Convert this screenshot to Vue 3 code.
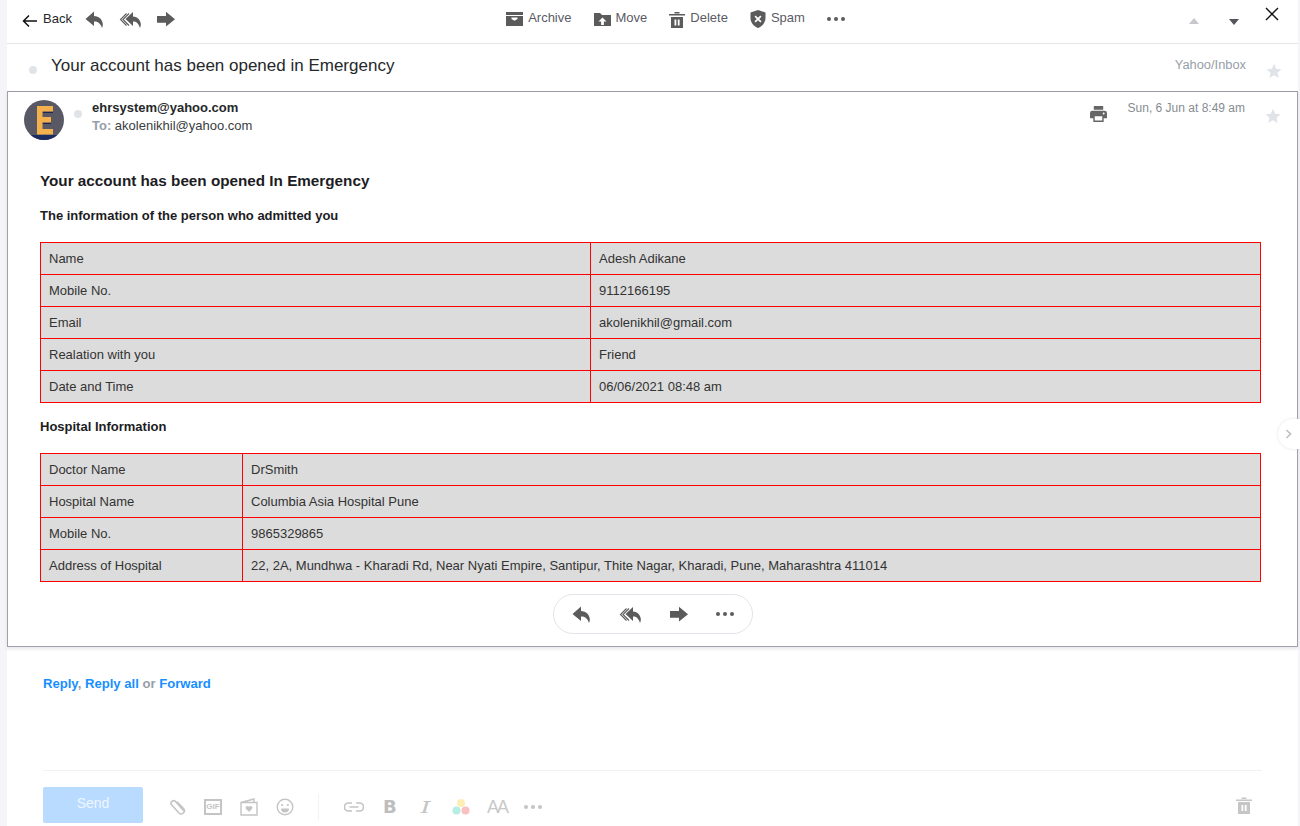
<script setup>
const personRows = [
  ['Name', 'Adesh Adikane'],
  ['Mobile No.', '9112166195'],
  ['Email', 'akolenikhil@gmail.com'],
  ['Realation with you', 'Friend'],
  ['Date and Time', '06/06/2021 08:48 am']
]

const hospitalRows = [
  ['Doctor Name', 'DrSmith'],
  ['Hospital Name', 'Columbia Asia Hospital Pune'],
  ['Mobile No.', '9865329865'],
  ['Address of Hospital', '22, 2A, Mundhwa - Kharadi Rd, Near Nyati Empire, Santipur, Thite Nagar, Kharadi, Pune, Maharashtra 411014']
]

const replyPath = 'M9 2.500 .5 10 9 17v-4.500c4 0 6.500 1.800 8 6.500 1-2 1-4 .5-5.500C16.300 9 13 7.200 9 7z'
const allPath = 'M14 3 6.500 10 14 17v-4.500c3.500 0 5.500 1.800 7 6.500 1-2 1-4 .5-5.500-1-3.800-3.800-5.500-7.500-6z'
const forwardPath = 'M0 7h9V2.800l9 7.400-9 7.300V13.700H0z'
</script>

<template>
  <div class="page">
    <div class="mail">
      <header class="toolbar">
        <div class="left-tools">
          <svg class="back-arrow" width="16" height="14" viewBox="0 0 16 14"><path d="M7 1.500 1.500 7 7 12.500M1.500 7H15" fill="none" stroke="#111" stroke-width="1.500" /></svg>
          <span class="back-label">Back</span>
          <svg class="ic reply-ic" width="20" height="20" viewBox="0 0 20 20"><path :d="replyPath" /></svg>
          <svg class="ic all-ic" width="24" height="20" viewBox="0 0 24 20">
            <path :d="allPath" />
            <path d="M7.500 4.500 1.500 10.500l6 6M10 4.500l-6 6 6 6" fill="none" stroke="#5b5b5b" stroke-width="1.100" />
          </svg>
          <svg class="ic fwd-ic" width="19" height="20" viewBox="0 0 19 20"><path :d="forwardPath" /></svg>
        </div>
        <div class="mid-tools">
          <span class="tool">
            <svg class="ic" width="17" height="14" viewBox="0 0 17 14"><path d="M0 0h17v3H0zM0 4h17v10H0zM5.500 5.500v1.600l3 1.600 3-1.600V5.500z" fill-rule="evenodd" /></svg>
            Archive
          </span>
          <span class="tool">
            <svg class="ic" width="17" height="16" viewBox="0 0 17 16"><path d="M0 2h6l2 2h9v11H0zM8.500 6.500l-4 4h2.600V14h2.800v-3.500h2.600z" fill-rule="evenodd" /></svg>
            Move
          </span>
          <span class="tool">
            <svg class="ic" width="16" height="17" viewBox="0 0 16 17"><path d="M0 3h16v1.400H0zM5.500 1h5v1.400h-5zM2 6h12v11H2zM5.500 8.500v6h1.800v-6zM8.800 8.500v6h1.800v-6z" fill-rule="evenodd" /></svg>
            Delete
          </span>
          <span class="tool">
            <svg class="ic" width="16" height="18" viewBox="0 0 16 18"><path d="M8 0 15.500 2.500V8c0 4.500-3 8-7.500 10C3.500 16 .5 12.500 .5 8V2.500zM5.700 5.500 4.500 6.700 6.800 9l-2.300 2.300 1.200 1.200L8 10.200l2.300 2.300 1.200-1.200L9.200 9l2.300-2.300-1.200-1.200L8 7.800z" fill-rule="evenodd" /></svg>
            Spam
          </span>
          <span class="dots"><i /><i /><i /></span>
        </div>
        <div class="right-tools">
          <span class="tri up" />
          <span class="tri down" />
          <svg class="close" width="14" height="14" viewBox="0 0 14 14"><path d="M1 1l12 12M13 1 1 13" stroke="#111" stroke-width="1.400" fill="none" /></svg>
        </div>
      </header>

      <div class="subject-row">
        <span class="dot subject-dot" />
        <h1 class="subject">Your account has been opened in Emergency</h1>
        <span class="folder">Yahoo/Inbox</span>
        <svg class="star" width="16" height="16" viewBox="0 0 16 16"><path d="M8 .8l2.200 4.900 5.300.5-4 3.500 1.200 5.200L8 12.200l-4.700 2.700 1.200-5.200-4-3.500 5.300-.5z" /></svg>
      </div>

      <section class="card">
        <div class="card-head">
          <div class="avatar">
            <svg width="40" height="40" viewBox="0 0 40 40">
              <rect width="40" height="40" fill="#595965" />
              <rect y="35" width="40" height="5" fill="#1d2b63" />
              <path d="M18.500 11.500H29v1.500H18.500zM18.500 22.500H27V24h-8.500z" fill="#1d2550" />
              <path d="M13 6h16v5.500H18.500V17H27v5.500h-8.500V29H29v5.500H13z" fill="#f5b04e" />
            </svg>
          </div>
          <span class="dot head-dot" />
          <div class="addresses">
            <div class="from">ehrsystem@yahoo.com</div>
            <div class="to"><b>To:</b> akolenikhil@yahoo.com</div>
          </div>
          <svg class="ic print" width="17" height="16" viewBox="0 0 18 17"><path d="M4 0h10v4H4zM2.500 5h13A2.500 2.500 0 0 1 18 7.500V13h-3.500v4h-11v-4H0V7.500A2.500 2.500 0 0 1 2.500 5zM5 11v4.500h8V11zM14.500 7a1 1 0 1 0 0 2 1 1 0 0 0 0-2z" fill-rule="evenodd" /></svg>
          <span class="date">Sun, 6 Jun at 8:49 am</span>
          <svg class="star card-star" width="16" height="16" viewBox="0 0 16 16"><path d="M8 .8l2.200 4.900 5.300.5-4 3.500 1.200 5.200L8 12.200l-4.700 2.700 1.200-5.200-4-3.500 5.300-.5z" /></svg>
        </div>

        <div class="body">
          <h2 class="body-title">Your account has been opened In Emergency</h2>
          <h3 class="body-sub">The information of the person who admitted you</h3>
          <table class="info first-table">
            <colgroup><col class="person-col" /><col /></colgroup>
            <tr v-for="row in personRows" :key="row[0]">
              <td>{{ row[0] }}</td>
              <td>{{ row[1] }}</td>
            </tr>
          </table>
          <h3 class="body-sub hospital-sub">Hospital Information</h3>
          <table class="info second-table">
            <colgroup><col class="hospital-col" /><col /></colgroup>
            <tr v-for="row in hospitalRows" :key="row[0]">
              <td>{{ row[0] }}</td>
              <td>{{ row[1] }}</td>
            </tr>
          </table>
        </div>

        <div class="pill-wrap">
          <div class="pill">
            <svg class="ic" width="20" height="20" viewBox="0 0 20 20"><path :d="replyPath" /></svg>
            <svg class="ic" width="24" height="20" viewBox="0 0 24 20">
              <path :d="allPath" />
              <path d="M7.500 4.500 1.500 10.500l6 6M10 4.500l-6 6 6 6" fill="none" stroke="#5b5b5b" stroke-width="1.100" />
            </svg>
            <svg class="ic" width="19" height="20" viewBox="0 0 19 20"><path :d="forwardPath" /></svg>
            <span class="dots"><i /><i /><i /></span>
          </div>
        </div>
      </section>

      <div class="reply-links">
        <a>Reply</a><span class="sep">,</span> <a>Reply all</a> <span class="sep">or</span> <a>Forward</a>
      </div>

      <div class="compose">
        <button class="send">Send</button>
        <div class="compose-icons">
          <svg width="18" height="18" viewBox="0 0 18 18"><path d="M15.500 13.500 7.500 4.500a2.600 2.600 0 0 0-4 3.300l7.500 8.200a3.200 3.200 0 0 0 4.700-4.300L9 4.800" transform="translate(-1 -1)" fill="none" stroke="#c4c4c4" stroke-width="1.600" /></svg>
          <span class="gif">GIF</span>
          <svg width="18" height="18" viewBox="0 0 18 18"><path d="M1 4.500 14 1v3.500M1 4.500h16V17H1z" fill="none" stroke="#c4c4c4" stroke-width="1.400" /><path d="M9 14 5.800 10.800a1.800 1.800 0 0 1 3.200-1.700 1.800 1.800 0 0 1 3.200 1.700z" fill="#c4c4c4" /></svg>
          <svg width="18" height="18" viewBox="0 0 18 18"><circle cx="9" cy="9" r="7.800" fill="none" stroke="#c4c4c4" stroke-width="1.400" /><circle cx="6.200" cy="7" r="1.100" fill="#c4c4c4" /><circle cx="11.800" cy="7" r="1.100" fill="#c4c4c4" /><path d="M5 10.500h8a4 4 0 0 1-8 0z" fill="#c4c4c4" /></svg>
        </div>
        <div class="compose-divider" />
        <div class="format-icons">
          <svg class="link-ic" width="20" height="10" viewBox="0 0 20 10"><path d="M8 1H4.500a4 4 0 0 0 0 8H8M12 1h3.500a4 4 0 0 1 0 8H12M5.500 5h9" fill="none" stroke="#c4c4c4" stroke-width="1.600" /></svg>
          <b class="fmt-b">B</b>
          <i class="fmt-i">I</i>
          <svg class="colors-ic" width="18" height="18" viewBox="0 0 18 18"><circle cx="9" cy="5" r="4" fill="#fdeeb5" /><circle cx="4.500" cy="12.500" r="4" fill="#b5efe3" /><circle cx="13.500" cy="12.500" r="4" fill="#fbc0c0" /></svg>
          <span class="fmt-a">AA</span>
          <span class="dots faded"><i /><i /><i /></span>
        </div>
        <svg class="compose-trash" width="16" height="17" viewBox="0 0 16 17"><path d="M0 2.500h16v1.400H0zM5.500 .5h5v1.400h-5zM2 5h12v12H2zM5.500 8v6h1.800V8zM8.800 8v6h1.800V8z" fill="#c6c6c6" fill-rule="evenodd" /></svg>
      </div>

      <span class="next-btn">
        <svg width="8" height="10" viewBox="0 0 8 10"><path d="M1.500 1 5.500 5l-4 4" fill="none" stroke="#bdbdc4" stroke-width="1.600" /></svg>
      </span>
    </div>
  </div>
</template>

<style>
html, body {
  margin: 0;
  background: #f5f5f8;
}
</style>

<style scoped>
.page {
  height: 826px;
  overflow: hidden;
  padding: 0 2px 0 7px;
  font-family: "Liberation Sans", Arial, sans-serif;
  color: #26282a;
}

.mail {
  position: relative;
  height: 826px;
  background: #fff;
}

.ic {
  fill: #5b5b5b;
  flex: none;
}

.toolbar {
  display: grid;
  grid-template-columns: 1fr auto 1fr;
  height: 43px;
  border-bottom: 1px solid #e5e5e8;
  align-items: center;
}

.left-tools {
  display: flex;
  align-items: center;
  padding-left: 15px;
  padding-bottom: 5px;
}

.back-arrow {
  margin-top: 3px;
}

.back-label {
  font-size: 13px;
  margin: 0 0 2px 5px;
  color: #26282a;
}

.reply-ic {
  margin-left: 13px;
}

.all-ic {
  margin-left: 14px;
}

.fwd-ic {
  margin-left: 14px;
}

.mid-tools {
  display: flex;
  align-items: center;
  gap: 22px;
  padding-bottom: 9px;
  padding-left: 46px;
  font-size: 13px;
  color: #5b5b66;
}

.tool {
  display: flex;
  align-items: center;
  gap: 5px;
}

.tool .ic,
.mid-tools .dots {
  margin-top: 4px;
}

.dots {
  display: flex;
  gap: 3px;
}

.dots i {
  width: 4px;
  height: 4px;
  border-radius: 50%;
  background: #5b5b5b;
}

.dots.faded i {
  background: #c4c4c4;
}

.right-tools {
  display: flex;
  justify-content: flex-end;
  align-items: center;
  padding-right: 19px;
}

.tri {
  width: 0;
  height: 0;
  border-left: 5.500px solid transparent;
  border-right: 5.500px solid transparent;
}

.tri.up {
  border-bottom: 6px solid #c8c8cc;
  margin-bottom: 2px;
}

.tri.down {
  border-top: 6px solid #55555c;
  margin-left: 30px;
}

.close {
  margin-left: 26px;
  margin-bottom: 16px;
}

.subject-row {
  display: flex;
  height: 47px;
  position: relative;
  align-items: center;
}

.dot {
  width: 8px;
  height: 8px;
  border-radius: 50%;
  background: #e0e4e9;
  flex: none;
}

.subject-dot {
  margin: 5px 0 0 22px;
}

.subject {
  margin: 0 0 3px 14px;
  font-size: 17px;
  font-weight: 400;
  color: #26282a;
}

.folder {
  margin-left: auto;
  margin-right: 52px;
  margin-bottom: 7px;
  font-size: 12.850px;
  color: #979ea8;
}

.star {
  fill: #e0e4e9;
  flex: none;
}

.subject-row .star {
  position: absolute;
  right: 16px;
  top: 19px;
}

.card {
  height: 554px;
  border: 1px solid #a0a0ae;
  box-shadow: 0 2px 3px rgba(160, 160, 175, 0.25);
  border-top-color: #9a9aa6;
}

.card-head {
  display: flex;
  height: 50px;
  position: relative;
  padding: 8px 0 0 16px;
}

.avatar {
  width: 40px;
  height: 40px;
  flex: none;
  border-radius: 50%;
  overflow: hidden;
}

.head-dot {
  margin: 10px 10px 0 10px;
}

.from {
  font-size: 13px;
  font-weight: 700;
  line-height: 16px;
}

.to {
  font-size: 13px;
  line-height: 20px;
  color: #3a3d40;
}

.to b {
  color: #979ea8;
}

.print {
  position: absolute;
  left: 1082px;
  top: 14px;
  fill: #666;
}

.date {
  position: absolute;
  right: 52px;
  top: 9px;
  font-size: 12px;
  color: #878c91;
}

.card-star {
  position: absolute;
  right: 16px;
  top: 16px;
}

.body {
  padding: 21px 36px 0 32px;
}

.body-title {
  margin: 0;
  font-size: 15.250px;
  line-height: 20px;
  font-weight: 700;
  color: #1d1d1f;
}

.body-sub {
  margin: 15px 0 0;
  font-size: 13px;
  line-height: 20px;
  font-weight: 700;
  color: #1d1d1f;
}

.hospital-sub {
  margin-top: 14px;
}

.info {
  width: 100%;
  border-collapse: collapse;
  table-layout: fixed;
  background: #dcdcdc;
  font-size: 13px;
  margin-top: 16px;
}

.person-col {
  width: 550px;
}

.hospital-col {
  width: 202px;
}

.info td {
  height: 32px;
  padding: 0 8px;
  border: 1px solid #f00;
  color: #333;
  box-sizing: border-box;
}

.pill-wrap {
  display: flex;
  justify-content: center;
  margin-top: 12px;
}

.pill {
  display: flex;
  align-items: center;
  justify-content: center;
  gap: 27px;
  width: 198px;
  height: 38px;
  border: 1px solid #e3e4ea;
  border-radius: 20px;
}

.reply-links {
  padding: 29px 0 0 36px;
  font-size: 13.100px;
  font-weight: 700;
  line-height: 16px;
}

.reply-links a {
  color: #188fff;
}

.sep {
  color: #979ea8;
}

.compose {
  display: flex;
  align-items: center;
  margin: 78px 36px 0 36px;
  padding-top: 16px;
  border-top: 1px solid #f1f1f5;
}

.send {
  width: 100px;
  height: 36px;
  border: 0;
  border-radius: 2px;
  background: #b9dbff;
  color: #eef6ff;
  font-family: inherit;
  font-size: 14px;
  padding: 0 0 5px;
}

.compose-icons {
  display: flex;
  align-items: center;
  gap: 18px;
  margin-left: 26px;
  margin-top: 3px;
}

.gif {
  width: 14px;
  height: 12px;
  margin-left: -1px;
  border: 2px solid #c4c4c4;
  font-size: 8px;
  line-height: 12px;
  text-align: center;
  color: #c4c4c4;
  font-weight: 700;
}

.compose-divider {
  width: 1px;
  height: 26px;
  background: #f3f3f5;
  margin: 3px 0 0 24px;
}

.format-icons {
  display: flex;
  align-items: center;
  margin: 3px 0 0 25px;
}

.fmt-b {
  margin-left: 19px;
  width: 16px;
  font-family: "DejaVu Sans", sans-serif;
  font-size: 18px;
  color: #bebebe;
  line-height: 18px;
}

.fmt-i {
  margin-left: 20px;
  width: 13px;
  font-family: "DejaVu Serif", serif;
  font-size: 17px;
  color: #c4c4c4;
  line-height: 18px;
  text-align: center;
  transform: scaleX(1.5);
}

.colors-ic {
  margin-left: 20px;
}

.fmt-a {
  margin-left: 17px;
  width: 20px;
  font-size: 18px;
  letter-spacing: -2px;
  color: #c8c8c8;
  line-height: 18px;
}

.format-icons .dots {
  margin-left: 17px;
}

.compose-trash {
  margin: 0 10px 0 auto;
}

.next-btn {
  position: absolute;
  right: -2px;
  top: 419px;
  width: 22px;
  height: 30px;
  border-radius: 15px 0 0 15px;
  background: #fff;
  box-shadow: 0 0 3px rgba(180, 180, 190, 0.4);
  display: flex;
  align-items: center;
  justify-content: center;
}
</style>
